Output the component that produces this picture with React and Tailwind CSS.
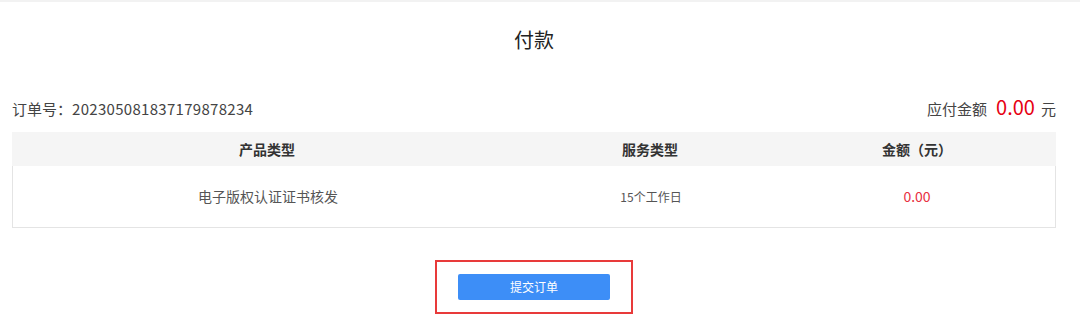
const font = {
  fontFamily: '"Noto Sans CJK SC", "Noto Sans", sans-serif',
};

const rows = [
  { product: "电子版权认证证书核发", service: "15个工作日", amount: "0.00" },
];

export default function App() {
  return (
    <div className="w-[1080px] h-[329px] bg-white text-[#333]" style={font}>
      <div className="h-[2px] bg-[#f2f2f2]" />

      <div className="pl-3 pr-6">
        <h1 className="mt-[24px] text-center text-[20px] leading-[28px] font-normal text-[#222]">付款</h1>

        {/* order info */}
        <div className="mt-[42px] flex items-end justify-between h-[24px]">
          <div className="text-[15px] leading-[22px] text-[#444]">
            订单号：<span className="tracking-[0.3px]">202305081837179878234</span>
          </div>
          <div className="flex items-baseline text-[15px] text-[#444]">
            <span>应付金额</span>
            <span className="ml-[9px] mr-[6px] text-[20px] leading-[24px] text-[#e60012]">0.00</span>
            <span>元</span>
          </div>
        </div>

        {/* table */}
        <div className="mt-3">
          <div className="grid grid-cols-[510px_256px_1fr] h-[34px] items-center bg-[#f5f5f5] text-[14px] font-bold text-[#333]">
            <div className="text-center">产品类型</div>
            <div className="text-center">服务类型</div>
            <div className="text-center">金额（元）</div>
          </div>
          {rows.map((r) => (
            <div
              key={r.product}
              className="grid grid-cols-[510px_256px_1fr] h-[62px] items-center border border-t-0 border-[#e4e4e4]"
            >
              <div className="text-center text-[14px] text-[#555]">{r.product}</div>
              <div className="text-center text-[12px] text-[#555]">{r.service}</div>
              <div className="text-center text-[14px] text-[#e8303f]">{r.amount}</div>
            </div>
          ))}
        </div>

        {/* submit */}
        <div className="mt-[32px] flex justify-center">
          <div className="w-[198px] h-[54px] border-2 border-[#e83a3a] flex items-center justify-center">
            <button className="w-[152px] h-[26px] rounded-[2px] bg-[#3d8ef7] text-white text-[12px] leading-[26px]">
              提交订单
            </button>
          </div>
        </div>
      </div>
    </div>
  );
}
